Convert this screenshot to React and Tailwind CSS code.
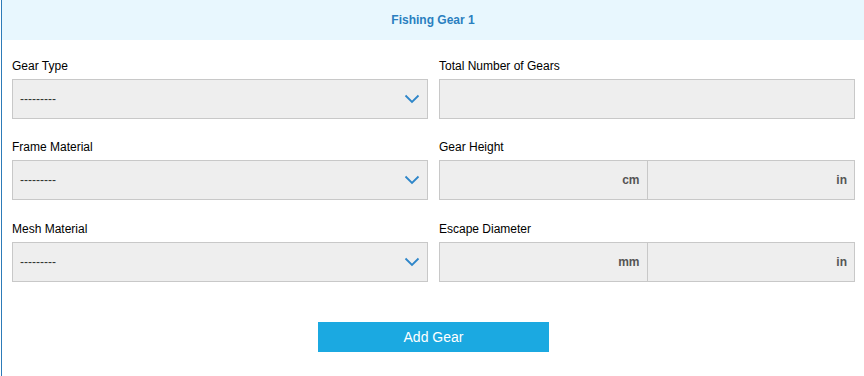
import React from 'react';

function Chevron() {
  return (
    <svg width="16" height="10" viewBox="0 0 16 10" className="shrink-0">
      <path d="M1.5 1.5 L8 8 L14.5 1.5" fill="none" stroke="#2e86c9" strokeWidth="1.8" />
    </svg>
  );
}

function Label({ children }) {
  return <label className="text-[12px] leading-[15px] text-black mb-[5px]">{children}</label>;
}

function SelectField({ label }) {
  return (
    <div className="flex flex-col">
      <Label>{label}</Label>
      <div className="h-[40px] bg-[#eeeeee] border border-[#c8c8c8] flex items-center justify-between pl-[7px] pr-[7px]">
        <span className="text-[12px] text-[#333]">---------</span>
        <Chevron />
      </div>
    </div>
  );
}

function TextField({ label }) {
  return (
    <div className="flex flex-col">
      <Label>{label}</Label>
      <div className="h-[40px] bg-[#eeeeee] border border-[#c8c8c8]" />
    </div>
  );
}

function UnitField({ label, unit }) {
  return (
    <div className="flex flex-col">
      <Label>{label}</Label>
      <div className="h-[40px] bg-[#eeeeee] border border-[#c8c8c8] flex">
        <div className="flex-1 flex items-center justify-end pr-[7px] border-r border-[#c8c8c8] text-[12px] font-bold text-[#555]">
          {unit}
        </div>
        <div className="flex-1 flex items-center justify-end pr-[7px] text-[12px] font-bold text-[#555]">
          in
        </div>
      </div>
    </div>
  );
}

export default function App() {
  return (
    <div className="w-[864px] h-[376px] bg-white pl-px" style={{ fontFamily: '"Liberation Sans", Arial, sans-serif' }}>
      <div className="h-full border-l border-[#2d7bb8] flex flex-col">
        <div className="h-[40px] bg-[#e8f7fe] flex items-center justify-center">
          <h2 className="text-[12px] font-bold text-[#2a7fc0]">Fishing Gear 1</h2>
        </div>
        <div className="flex flex-col pl-[10px] pr-[9px] pt-[19px]">
          <div className="grid grid-cols-2 gap-x-[11px]">
            <SelectField label="Gear Type" />
            <TextField label="Total Number of Gears" />
          </div>
          <div className="grid grid-cols-2 gap-x-[11px] mt-[21px]">
            <SelectField label="Frame Material" />
            <UnitField label="Gear Height" unit="cm" />
          </div>
          <div className="grid grid-cols-2 gap-x-[11px] mt-[22px]">
            <SelectField label="Mesh Material" />
            <UnitField label="Escape Diameter" unit="mm" />
          </div>
        </div>
        <div className="flex justify-center pt-[40px]">
          <button className="w-[231px] h-[30px] bg-[#1ba9e1] text-white text-[14px] ml-[1px]">Add Gear</button>
        </div>
      </div>
    </div>
  );
}
